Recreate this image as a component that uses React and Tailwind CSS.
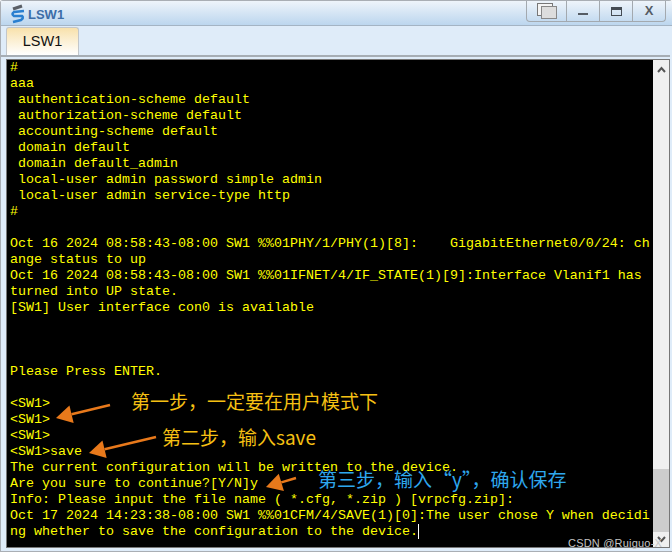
const lines = [
  "#",
  "aaa",
  " authentication-scheme default",
  " authorization-scheme default",
  " accounting-scheme default",
  " domain default",
  " domain default_admin",
  " local-user admin password simple admin",
  " local-user admin service-type http",
  "#",
  "",
  "Oct 16 2024 08:58:43-08:00 SW1 %%01PHY/1/PHY(1)[8]:    GigabitEthernet0/0/24: ch",
  "ange status to up",
  "Oct 16 2024 08:58:43-08:00 SW1 %%01IFNET/4/IF_STATE(1)[9]:Interface Vlanif1 has",
  "turned into UP state.",
  "[SW1] User interface con0 is available",
  "",
  "",
  "",
  "Please Press ENTER.",
  "",
  "<SW1>",
  "<SW1>",
  "<SW1>",
  "<SW1>save",
  "The current configuration will be written to the device.",
  "Are you sure to continue?[Y/N]y",
  "Info: Please input the file name ( *.cfg, *.zip ) [vrpcfg.zip]:",
  "Oct 17 2024 14:23:38-08:00 SW1 %%01CFM/4/SAVE(1)[0]:The user chose Y when decidi",
  "ng whether to save the configuration to the device.",
];

function Arrow({ x1, y1, x2, y2 }) {
  const a = Math.atan2(y2 - y1, x2 - x1);
  const L = 16, W = 9;
  const bx = x2 - L * Math.cos(a), by = y2 - L * Math.sin(a);
  const nx = -Math.sin(a) * W, ny = Math.cos(a) * W;
  return (
    <svg className="absolute left-0 top-0" width="672" height="558">
      <line x1={x1} y1={y1} x2={bx} y2={by} stroke="#e8791b" strokeWidth="2.5" />
      <polygon points={`${x2},${y2} ${bx + nx},${by + ny} ${bx - nx},${by - ny}`} fill="#e8791b" />
    </svg>
  );
}

export default function App() {
  return (
    <div className="relative w-[672px] h-[558px] bg-white overflow-hidden font-['Liberation_Sans',sans-serif]">
      <div className="w-[672px] h-[552px] border border-r-0 border-[#a9aeb4] rounded-t-[3px] bg-[#dfecf9] flex flex-col">
        {/* title bar */}
        <div className="h-[25px] shrink-0 flex items-start justify-between bg-gradient-to-b from-[#eef4fa] to-[#bcd6ee] border-b border-[#a4b4c4]">
          <div className="flex items-center gap-[2px] pl-[9px] h-[26px]">
            <svg width="16" height="20" viewBox="0 0 16 20">
              <path d="M3 5 L12 2" stroke="#5a5f66" strokeWidth="3" />
              <path d="M14 7 L4 8 Q1 10 4 12 L12 12 Q14 14 11 16 L3 18" fill="none" stroke="#2a7fd0" strokeWidth="2.6" />
            </svg>
            <span className="text-[13px] font-bold text-[#3c6ea8] leading-none">LSW1</span>
          </div>
          <div className="flex h-[21px] mr-[6px] border-x border-b border-[#a3a9af] rounded-b-[4px]">
            <div className="w-[40px] flex items-center justify-center border-r border-[#a3a9af]">
              <svg width="22" height="16" viewBox="0 0 22 16">
                <rect x="1.5" y="0.5" width="15" height="12" fill="#f4f4f4" stroke="#777" />
                <rect x="5.5" y="3.5" width="15" height="12" fill="#ddd" stroke="#888" />
              </svg>
            </div>
            <div className="w-[33px] flex items-center justify-center border-r border-[#a3a9af]">
              <div className="w-[10px] h-[2px] mt-[6px] bg-[#555c64]" />
            </div>
            <div className="w-[33px] flex items-center justify-center border-r border-[#a3a9af]">
              <div className="w-[11px] h-[9px] border border-[#444b53] border-t-[3px]" />
            </div>
            <div className="w-[32px] flex items-center justify-center text-[13px] font-bold text-[#555c64]">X</div>
          </div>
        </div>
        {/* tab bar */}
        <div className="h-[29px] shrink-0 flex items-end pl-[5px] mr-[2px] border-b-2 border-[#a6adb4] box-content">
          <div className="w-[73px] h-[28px] flex items-center justify-center text-[14.5px] text-[#111] border border-b-0 border-[#c2c6ca] rounded-t-[3px] bg-gradient-to-b from-[#f8e1ab] to-white">
            LSW1
          </div>
        </div>
        {/* terminal */}
        <div className="flex-1 ml-[5px] mr-[2px] mt-[2px] mb-[3px] flex border border-[#777] min-h-0">
          <div className="flex-1 bg-black pl-[3px] min-w-0 overflow-hidden text-[#ffff00] font-['Liberation_Mono',monospace] text-[13.33px] leading-[16px] whitespace-pre">
            {lines.map((l, i) => (
              <div key={i} className="h-[16px]">
                {l}
                {i === lines.length - 1 && <span className="inline-block w-px h-[15px] bg-white align-top" />}
              </div>
            ))}
          </div>
          <div className="w-[16px] shrink-0 bg-[#f0f0f0] flex flex-col items-center">
            <svg className="mt-[6px] shrink-0" width="9" height="7" viewBox="0 0 9 7">
              <path d="M1 6 L4.5 2 L8 6" fill="none" stroke="#555" strokeWidth="2" />
            </svg>
            <div className="flex-1" />
            <div className="w-full h-[63px] bg-[#cdcdcd]" />
            <svg className="my-[4px] shrink-0" width="9" height="7" viewBox="0 0 9 7">
              <path d="M1 1 L4.5 5 L8 1" fill="none" stroke="#555" strokeWidth="2" />
            </svg>
          </div>
        </div>
      </div>

      {/* annotations */}
      <Arrow x1={110} y1={405} x2={56} y2={418} />
      <Arrow x1={156} y1={437} x2={89} y2={453} />
      <Arrow x1={296} y1={478} x2={266} y2={487} />
      <div className="absolute left-[131px] top-[389px] text-[19px] leading-[24px] text-[#f6c013] font-['Noto_Sans_CJK_SC',sans-serif] whitespace-nowrap">第一步，一定要在用户模式下</div>
      <div className="absolute left-[162px] top-[425px] text-[19px] leading-[24px] text-[#f6c013] font-['Noto_Sans_CJK_SC',sans-serif] whitespace-nowrap">第二步，输入save</div>
      <div className="absolute left-[318px] top-[467px] text-[19px] leading-[24px] text-[#2ea7ee] font-['Noto_Sans_CJK_SC',sans-serif] whitespace-nowrap">第三步，输入<span className="ml-[1px]">“y”，确认保存</span></div>
      <div className="absolute left-[568px] top-[536px] text-[11px] leading-[14px] tracking-[0.2px] text-[#c4c4c4] whitespace-nowrap">CSDN @Ruiguo-X</div>
    </div>
  );
}
